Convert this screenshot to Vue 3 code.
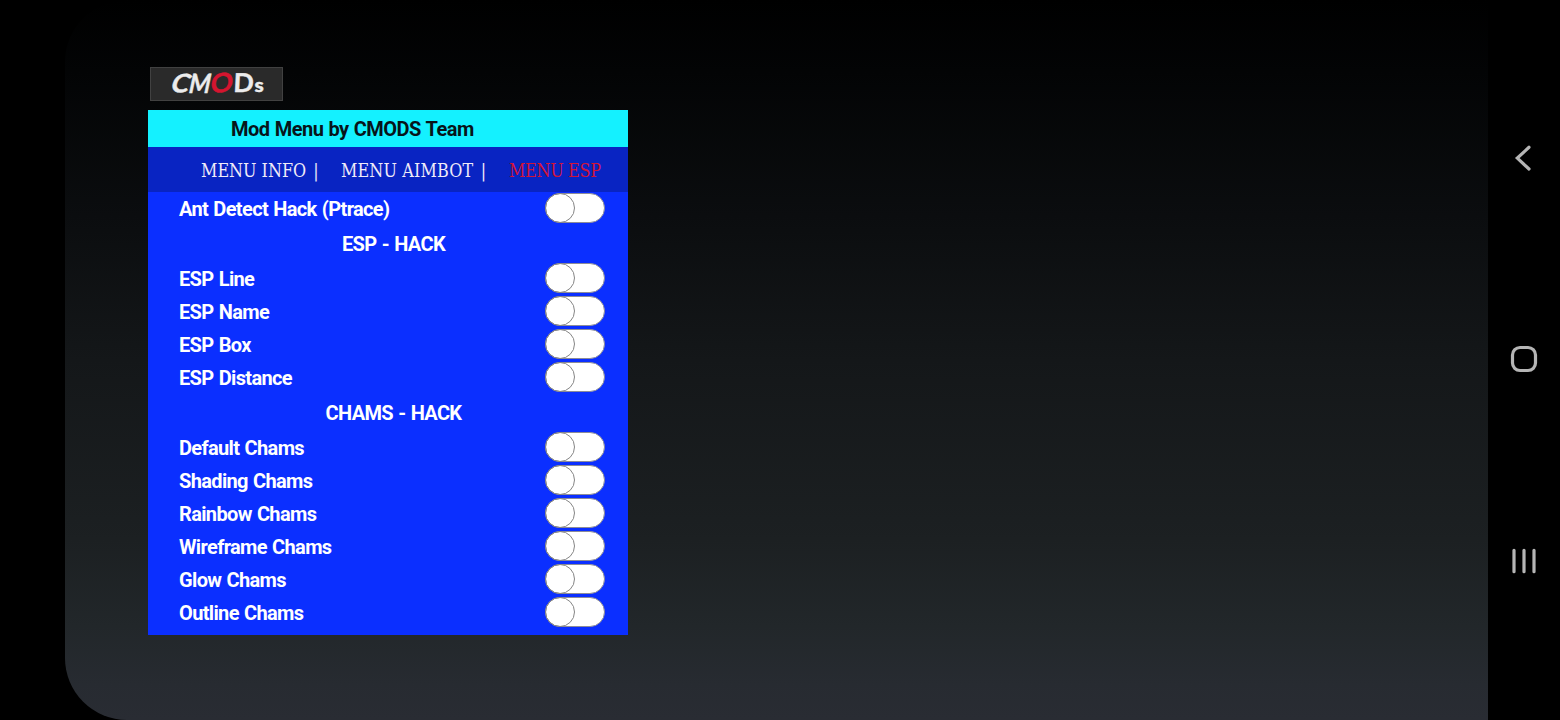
<script setup>
const items = [
  { label: 'Ant Detect Hack (Ptrace)' },
  { label: 'ESP - HACK', heading: true },
  { label: 'ESP Line' },
  { label: 'ESP Name' },
  { label: 'ESP Box' },
  { label: 'ESP Distance' },
  { label: 'CHAMS - HACK', heading: true },
  { label: 'Default Chams' },
  { label: 'Shading Chams' },
  { label: 'Rainbow Chams' },
  { label: 'Wireframe Chams' },
  { label: 'Glow Chams' },
  { label: 'Outline Chams' },
]
</script>

<template>
  <div class="screen">
    <main class="stage">
      <svg class="logo" width="133" height="34" viewBox="0 0 133 34">
        <rect x="0.5" y="0.5" width="132" height="33" fill="#2a2a2a" stroke="#414141" />
        <g class="logo-text">
          <text transform="translate(19 24.5) rotate(4) skewX(-16) scale(1.04 1)">C</text>
          <text transform="translate(37.5 26) skewX(-12) scale(0.88 1.02)">M</text>
          <text class="red" transform="translate(60 26.5) rotate(-6) skewX(-10) scale(1.08 1.02)">O</text>
          <text transform="translate(83 24.5) skewX(-3) scale(1.03 1)">D</text>
          <text class="small" transform="translate(104.5 25) scale(1.1 1)">s</text>
        </g>
      </svg>
      <section class="panel">
        <header class="title"><span>Mod Menu by CMODS Team</span></header>
        <nav class="tabs">
          <span class="info">MENU INFO <em>|</em></span>
          <span class="aim">MENU AIMBOT <em>|</em></span>
          <span class="active">MENU ESP</span>
        </nav>
        <div class="list">
          <template v-for="item in items" :key="item.label">
            <h2 v-if="item.heading" class="heading">{{ item.label }}</h2>
            <div v-else class="row">
              <span>{{ item.label }}</span>
              <i class="switch"><b></b></i>
            </div>
          </template>
        </div>
      </section>
    </main>
    <aside class="navbar">
      <svg width="72" height="60" viewBox="0 0 72 60">
        <path d="M41 17.3 29.3 28.1 41 39" />
      </svg>
      <svg width="72" height="60" viewBox="0 0 72 60">
        <rect x="24.5" y="17.5" width="23" height="23" rx="7.5" />
      </svg>
      <svg width="72" height="60" viewBox="0 0 72 60">
        <path d="M26 20.3V41.7M36 20.3V41.7M46 20.3V41.7" />
      </svg>
    </aside>
  </div>
</template>

<style>
body { background: #000; overflow: hidden; }
</style>

<style scoped>
.screen {
  display: flex;
  width: 1560px;
  height: 720px;
  padding-left: 65px;
  box-sizing: border-box;
  background: #000;
  font-family: Roboto, sans-serif;
}
.stage {
  width: 1423px;
  height: 720px;
  box-sizing: border-box;
  padding: 67px 0 0 83px;
  border-radius: 62px 0 0 62px;
  background: linear-gradient(#000 0, #030405 10%, #0b0d0f 30%, #141719 50%, #1c2022 75%, #22272a 87%, #272b31 95%, #292c33 100%);
}
.logo { display: block; margin: 0 0 9px 2px; overflow: visible; }
.logo-text { font: 700 26px Lato, sans-serif; fill: #ececec; stroke: #ececec; stroke-width: 0.4; stroke-linejoin: round; }
.logo-text .red { fill: #d5152f; stroke: #d5152f; }
.logo-text .small { font-size: 19px; font-weight: 900; }
.panel { width: 480px; height: 525px; background: #0b2fff; }
.title {
  height: 37px;
  padding-left: 83px;
  background: #14f1ff;
  color: #07151a;
  font-weight: 700;
  font-size: 20px;
  line-height: 38px;
  letter-spacing: -0.5px;
  word-spacing: 0.6px;
}
.tabs {
  display: flex;
  height: 45px;
  background: #0924c2;
  color: #f0ebf8;
  font-family: "DejaVu Serif Condensed", "DejaVu Serif", serif;
  font-stretch: condensed;
  font-size: 17.8px;
  line-height: 48px;
  white-space: pre;
}
.tabs span { flex: none; }
.tabs em { font-style: normal; }
.info { width: 140px; margin-left: 53px; }
.info em { margin-left: 2px; }
.aim { width: 168px; letter-spacing: 0.15px; }
.aim em { margin-left: 2px; }
.active { color: #d0143a; letter-spacing: -0.3px; }
.list { color: #fff; font-weight: 700; font-size: 20px; letter-spacing: -0.65px; word-spacing: 0.9px; }
.row {
  display: flex;
  justify-content: space-between;
  height: 33px;
  padding: 0 23px 0 31px;
  line-height: 34px;
}
.heading {
  height: 37px;
  margin: 0;
  padding-left: 11px;
  font-size: 20px;
  line-height: 38px;
  text-align: center;
}
.switch {
  width: 60px;
  height: 30px;
  margin-top: 1px;
  box-sizing: border-box;
  border: 1px solid #8c8c98;
  border-radius: 15px;
  background: #fff;
}
.switch b {
  display: block;
  width: 30px;
  height: 30px;
  margin: -1px;
  box-sizing: border-box;
  border: 1px solid #858585;
  border-radius: 50%;
}
.navbar {
  display: flex;
  flex-direction: column;
  gap: 140px;
  width: 72px;
  padding-top: 130px;
  box-sizing: border-box;
}
.navbar svg { flex: none; fill: none; stroke: #b5b5b5; stroke-width: 3.2; stroke-linecap: round; }
</style>
